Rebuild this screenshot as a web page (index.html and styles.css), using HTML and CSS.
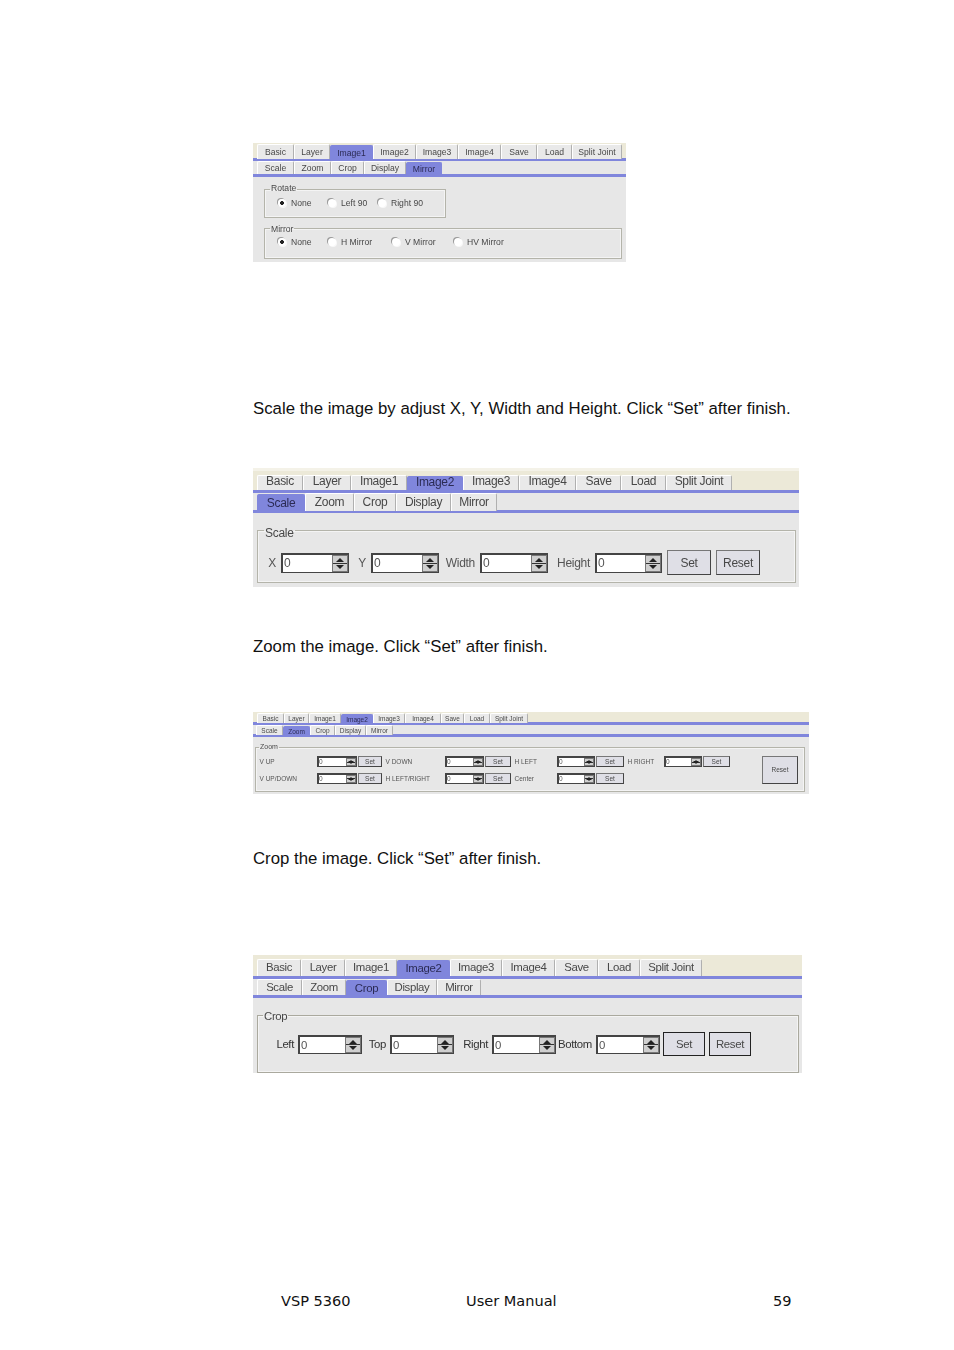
FILE: index.html
```html
<!DOCTYPE html>
<html lang="en">
<head>
<meta charset="utf-8">
<title>VSP 5360 User Manual</title>
<link rel="stylesheet" href="styles.css">
</head>
<body>
<main class="page">

<section class="panel p1">
  <div class="tabs">
    <span class="tab">Basic</span><span class="tab">Layer</span><span class="tab on">Image1</span><span class="tab">Image2</span><span class="tab">Image3</span><span class="tab">Image4</span><span class="tab">Save</span><span class="tab">Load</span><span class="tab">Split Joint</span>
  </div>
  <div class="subs">
    <span class="tab">Scale</span><span class="tab">Zoom</span><span class="tab">Crop</span><span class="tab">Display</span><span class="tab on">Mirror</span>
  </div>
  <fieldset class="box rotate">
    <legend>Rotate</legend>
    <div class="radios">
      <span class="radio sel">None</span><span class="radio">Left 90</span><span class="radio">Right 90</span>
    </div>
  </fieldset>
  <fieldset class="box mirror">
    <legend>Mirror</legend>
    <div class="radios">
      <span class="radio sel">None</span><span class="radio">H Mirror</span><span class="radio">V Mirror</span><span class="radio">HV Mirror</span>
    </div>
  </fieldset>
</section>

<p class="para para1">Scale the image by adjust X, Y, Width and Height. Click “Set” after finish.</p>

<section class="panel p2">
  <div class="tabs">
    <span class="tab">Basic</span><span class="tab">Layer</span><span class="tab">Image1</span><span class="tab on">Image2</span><span class="tab">Image3</span><span class="tab">Image4</span><span class="tab">Save</span><span class="tab">Load</span><span class="tab">Split Joint</span>
  </div>
  <div class="subs">
    <span class="tab on">Scale</span><span class="tab">Zoom</span><span class="tab">Crop</span><span class="tab">Display</span><span class="tab">Mirror</span>
  </div>
  <fieldset class="box">
    <legend>Scale</legend>
    <div class="fields">
      <span class="lbl">X</span><span class="num">0<i class="spin"></i></span>
      <span class="lbl">Y</span><span class="num">0<i class="spin"></i></span>
      <span class="lbl">Width</span><span class="num">0<i class="spin"></i></span>
      <span class="lbl">Height</span><span class="num">0<i class="spin"></i></span>
      <span class="btn">Set</span><span class="btn">Reset</span>
    </div>
  </fieldset>
</section>

<p class="para para2">Zoom the image. Click “Set” after finish.</p>

<section class="panel p3">
  <div class="tabs">
    <span class="tab">Basic</span><span class="tab">Layer</span><span class="tab">Image1</span><span class="tab on">Image2</span><span class="tab">Image3</span><span class="tab">Image4</span><span class="tab">Save</span><span class="tab">Load</span><span class="tab">Split Joint</span>
  </div>
  <div class="subs">
    <span class="tab">Scale</span><span class="tab on">Zoom</span><span class="tab">Crop</span><span class="tab">Display</span><span class="tab">Mirror</span>
  </div>
  <fieldset class="box">
    <legend>Zoom</legend>
    <div class="fields">
      <span class="lbl">V UP</span><span class="num">0<i class="spin"></i></span><span class="btn">Set</span>
      <span class="lbl">V DOWN</span><span class="num">0<i class="spin"></i></span><span class="btn">Set</span>
      <span class="lbl">H LEFT</span><span class="num">0<i class="spin"></i></span><span class="btn">Set</span>
      <span class="lbl">H RIGHT</span><span class="num">0<i class="spin"></i></span><span class="btn">Set</span>
      <span class="btn reset">Reset</span>
      <span class="lbl">V UP/DOWN</span><span class="num">0<i class="spin"></i></span><span class="btn">Set</span>
      <span class="lbl">H LEFT/RIGHT</span><span class="num">0<i class="spin"></i></span><span class="btn">Set</span>
      <span class="lbl">Center</span><span class="num">0<i class="spin"></i></span><span class="btn">Set</span>
    </div>
  </fieldset>
</section>

<p class="para para3">Crop the image. Click “Set” after finish.</p>

<section class="panel p4">
  <div class="tabs">
    <span class="tab">Basic</span><span class="tab">Layer</span><span class="tab">Image1</span><span class="tab on">Image2</span><span class="tab">Image3</span><span class="tab">Image4</span><span class="tab">Save</span><span class="tab">Load</span><span class="tab">Split Joint</span>
  </div>
  <div class="subs">
    <span class="tab">Scale</span><span class="tab">Zoom</span><span class="tab on">Crop</span><span class="tab">Display</span><span class="tab">Mirror</span>
  </div>
  <fieldset class="box">
    <legend>Crop</legend>
    <div class="fields">
      <span class="lbl">Left</span><span class="num">0<i class="spin"></i></span>
      <span class="lbl">Top</span><span class="num">0<i class="spin"></i></span>
      <span class="lbl">Right</span><span class="num">0<i class="spin"></i></span>
      <span class="lbl">Bottom</span><span class="num">0<i class="spin"></i></span>
      <span class="btn">Set</span><span class="btn">Reset</span>
    </div>
  </fieldset>
</section>

<footer class="foot">
  <span>VSP 5360</span><span>User Manual</span><span>59</span>
</footer>

</main>
</body>
</html>
```
FILE: styles.css
```css
* { box-sizing: border-box; }
html, body { margin: 0; background: #fff; }
.page {
  width: 954px;
  height: 1350px;
  padding: 143px 0 0 253px;
  overflow: hidden;
  font-family: "Liberation Sans", Arial, sans-serif;
  color: #000;
}

/* body copy */
.para { margin: 0; height: 20px; font-size: 16.8px; line-height: 20px; color: #111; white-space: nowrap; }
.para1 { margin-top: 137px; }
.para2 { margin-top: 50px; }
.para3 { margin-top: 55px; }
.foot {
  margin: 218px 0 0 28px;
  display: grid;
  grid-template-columns: 185px 307px auto;
  height: 20px;
  font-family: "DejaVu Sans", Verdana, sans-serif;
  font-size: 14.55px;
  line-height: 20px;
  color: #111;
}

/* dialog */
.panel {
  background: #e7e7e7;
  color: #484848;
  filter: blur(0.35px);
  overflow: hidden;
}
.tabs, .subs { display: grid; align-items: end; }
.tabs { background: #ece9d8; border-bottom: 3px solid #8086dc; }
.subs { border-bottom: 3px solid #8086dc; }
.tab {
  display: block;
  height: 100%;
  text-align: center;
  white-space: nowrap;
  background: #e9e9e9;
  border: 1px solid #fff;
  border-right-color: #b0b0b0;
  border-bottom: 0;
  border-radius: 2px 2px 0 0;
}
.tab.on { background: #8086dc; border-color: #8086dc; color: #2b2b55; position: relative; top: 1px; }

.box {
  margin: 0;
  padding: 0;
  min-width: 0;
  border: 1px solid #b4b4aa;
  box-shadow: 0 0 0 1px #f4f4f4 inset;
}
.box legend { padding: 0 1px; margin-left: 6px; line-height: 1; }

/* radios */
.radios { display: grid; align-items: center; }
.radio { display: flex; align-items: center; gap: 5px; white-space: nowrap; }
.radio::before {
  content: "";
  flex: none;
  width: 8px;
  height: 8px;
  border-radius: 50%;
  background: #fff;
  box-shadow: -1px -1px 0 #9a9a9a, 1px 1px 0 #f8f8f8;
}
.radio.sel::before { background: radial-gradient(circle, #222 0 1.6px, #fff 2.2px); }

/* fields */
.fields { display: grid; align-items: center; }
.lbl { white-space: nowrap; text-align: right; color: #555; }
.num {
  display: block;
  position: relative;
  background: #fff;
  border: 1px solid #444;
  border-top-width: 2px;
  border-left-width: 2px;
  text-align: left;
  padding-left: 1px;
  overflow: hidden;
  color: #555;
}
.spin {
  position: absolute;
  top: 0;
  right: 0;
  bottom: 0;
  width: 16px;
  background:
    linear-gradient(#333, #333) center / 100% 1px no-repeat,
    #cfcfcf;
  border: 1px solid #777;
}
.spin::before, .spin::after {
  content: "";
  position: absolute;
  left: 50%;
  margin-left: -4px;
  border-left: 4px solid transparent;
  border-right: 4px solid transparent;
}
.spin::before { top: 2px; border-bottom: 4px solid #222; }
.spin::after { bottom: 2px; border-top: 4px solid #222; }
.btn {
  display: block;
  background: #dfdfe6;
  border: 1px solid #444;
  border-top-color: #777;
  border-left-color: #777;
  text-align: center;
  white-space: nowrap;
}

/* panel 1: mirror */
.p1 { width: 373px; height: 119px; font-size: 8.6px; }
.p1 .tabs { height: 18px; padding: 1px 0 0 4px; grid-template-columns: 37px 36px 43px 43px 42px 43px 36px 35px 50px; }
.p1 .subs { height: 16px; padding-left: 4px; grid-template-columns: 37px 37px 33px 42px 36px; }
.p1 .tab { line-height: 14px; }
.p1 .subs .tab { line-height: 12px; }
.p1 .box { margin-left: 11px; height: 35px; }
.p1 .rotate { width: 182px; margin-top: 7px; height: 34px; }
.p1 .mirror { width: 358px; margin-top: 5px; height: 36px; }
.p1 legend { margin-left: 5px; height: 10px; line-height: 12px; }
.p1 .rotate legend { line-height: 9px; }
.p1 .radios { padding: 3px 0 0 13px; height: 15px; }
.p1 .rotate .radios { grid-template-columns: 50px 50px auto; }
.p1 .mirror .radios { grid-template-columns: 50px 64px 62px auto; }

/* panel 2: scale */
.p2 { width: 546px; height: 119px; font-size: 12px; margin-top: 49px; letter-spacing: -0.3px; }
.p2 .tabs { height: 25px; padding: 4px 0 0 4px; border-top: 3px solid #f4f2e8; grid-template-columns: 46px 48px 56px 56px 56px 57px 45px 45px 66px; }
.p2 .tab { line-height: 11px; }
.p2 .subs { height: 20px; padding-left: 4px; grid-template-columns: 48px 49px 42px 55px 46px; }
.p2 .subs .tab { line-height: 17px; }
.p2 .box { margin: 10px 3px 0 4px; height: 60px; }
.p2 legend { margin-left: 6px; font-size: 12px; height: 14px; line-height: 20px; }
.p2 .fields { padding: 13px 0 0 8px; grid-template-columns: 15px 68px 22px 68px 41px 68px 47px 67px 49px 49px; }
.p2 .lbl { padding-right: 5px; }
.p2 .num { height: 20px; line-height: 17px; }
.p2 .btn { height: 25px; line-height: 24px; width: 44px; justify-self: end; }

/* panel 3: zoom */
.p3 { width: 556px; height: 82px; font-size: 6.5px; margin-top: 55px; filter: blur(0.45px); }
.p3 .tabs { height: 13px; padding: 1px 0 0 4px; grid-template-columns: 27px 25px 32px 32px 32px 36px 23px 26px 38px; }
.p3 .subs { height: 12px; padding-left: 3px; grid-template-columns: 27px 27px 25px 31px 27px; }
.p3 .tab { line-height: 9px; }
.p3 .box { margin: 6px 4px 0 2px; height: 49px; }
.p3 legend { margin-left: 3px; font-size: 7px; height: 8px; line-height: 8px; }
.p3 .fields {
  padding: 5px 0 0 0;
  row-gap: 5px;
  grid-template-columns: 61px 40px 25px 63px 39px 27px 46px 38px 29px 40px 38px 28px 68px;
}
.p3 .lbl { text-align: left; padding-left: 3.5px; }
.p3 .num { height: 11px; line-height: 8px; padding-left: 0; }
.p3 .spin { width: 10px; }
.p3 .spin::before, .p3 .spin::after { margin-left: -3px; border-left-width: 3px; border-right-width: 3px; }
.p3 .spin::before { top: 1px; border-bottom-width: 3px; }
.p3 .spin::after { bottom: 1px; border-top-width: 3px; }
.p3 .btn { height: 11px; line-height: 10px; margin-left: 1px; }
.p3 .reset { grid-row: 1 / span 2; grid-column: 13; height: 28px; line-height: 26px; width: 36px; justify-self: end; }

/* panel 4: crop */
.p4 { width: 549px; height: 118px; font-size: 11.4px; margin-top: 86px; filter: blur(0.2px); letter-spacing: -0.35px; }
.p4 .tabs { height: 24px; padding: 4px 0 0 4px; grid-template-columns: 44px 44px 52px 53px 52px 53px 43px 42px 62px; }
.p4 .subs { height: 19px; padding-left: 4px; grid-template-columns: 45px 44px 41px 50px 44px; }
.p4 .tab { line-height: 15px; }
.p4 .box { margin: 10px 3px 0 4px; height: 65px; border-color: #aaa99e; }
.p4 legend { margin-left: 5px; font-size: 11.4px; height: 14px; line-height: 16px; }
.p4 .fields { padding: 10px 0 0 18px; grid-template-columns: 22px 64px 28px 64px 38px 64px 40px 64px 45px 46px; }
.p4 .lbl { padding-right: 4px; color: #333; }
.p4 .num { height: 19px; line-height: 16px; }
.p4 .btn { height: 24px; line-height: 22px; width: 42px; justify-self: end; border-color: #222; }
```
